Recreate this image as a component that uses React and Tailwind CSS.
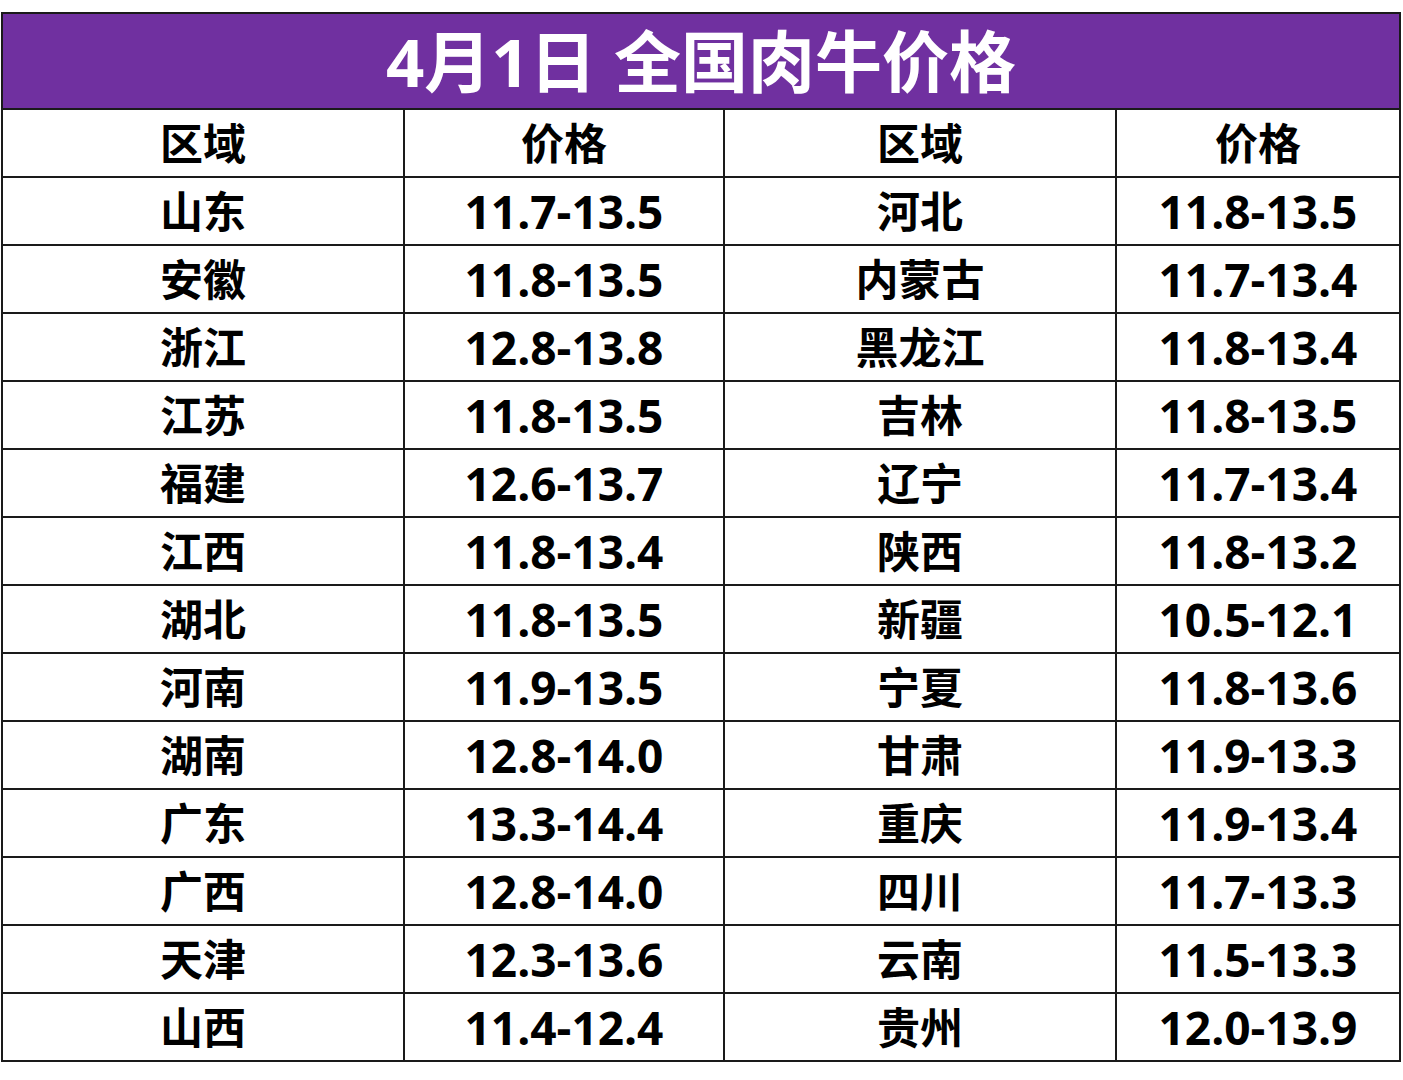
const rows = [
  ["山东", "11.7-13.5", "河北", "11.8-13.5"],
  ["安徽", "11.8-13.5", "内蒙古", "11.7-13.4"],
  ["浙江", "12.8-13.8", "黑龙江", "11.8-13.4"],
  ["江苏", "11.8-13.5", "吉林", "11.8-13.5"],
  ["福建", "12.6-13.7", "辽宁", "11.7-13.4"],
  ["江西", "11.8-13.4", "陕西", "11.8-13.2"],
  ["湖北", "11.8-13.5", "新疆", "10.5-12.1"],
  ["河南", "11.9-13.5", "宁夏", "11.8-13.6"],
  ["湖南", "12.8-14.0", "甘肃", "11.9-13.3"],
  ["广东", "13.3-14.4", "重庆", "11.9-13.4"],
  ["广西", "12.8-14.0", "四川", "11.7-13.3"],
  ["天津", "12.3-13.6", "云南", "11.5-13.3"],
  ["山西", "11.4-12.4", "贵州", "12.0-13.9"],
];

function Cell({ children, num }) {
  return (
    <div
      className={
        "h-[68px] border-b-2 border-r-2 border-[#1a1a1a] flex items-center justify-center font-bold text-black leading-none " +
        (num ? "text-[46px]" : "text-[43px]")
      }
    >
      {children}
    </div>
  );
}

export default function App() {
  return (
    <div
      className="w-[1403px] h-[1080px] bg-white pt-[12px] pl-[1px]"
      style={{ fontFamily: '"Open Sans", "Noto Sans CJK SC", sans-serif' }}
    >
      <div className="w-[1400px] border-l-2 border-t-2 border-[#1a1a1a] grid grid-cols-[402px_320px_392px_284px]">
        <div className="col-span-4 h-[96px] bg-[#7030a0] border-b-2 border-r-2 border-[#1a1a1a] flex items-center justify-center text-white font-bold text-[67px] leading-none">
          <span>4月1日 全国肉牛价格</span>
        </div>
        <Cell>区域</Cell>
        <Cell>价格</Cell>
        <Cell>区域</Cell>
        <Cell>价格</Cell>
        {rows.map((r, i) =>
          r.map((c, j) => (
            <Cell key={i + "-" + j} num={j % 2 === 1}>
              {c}
            </Cell>
          ))
        )}
      </div>
    </div>
  );
}
